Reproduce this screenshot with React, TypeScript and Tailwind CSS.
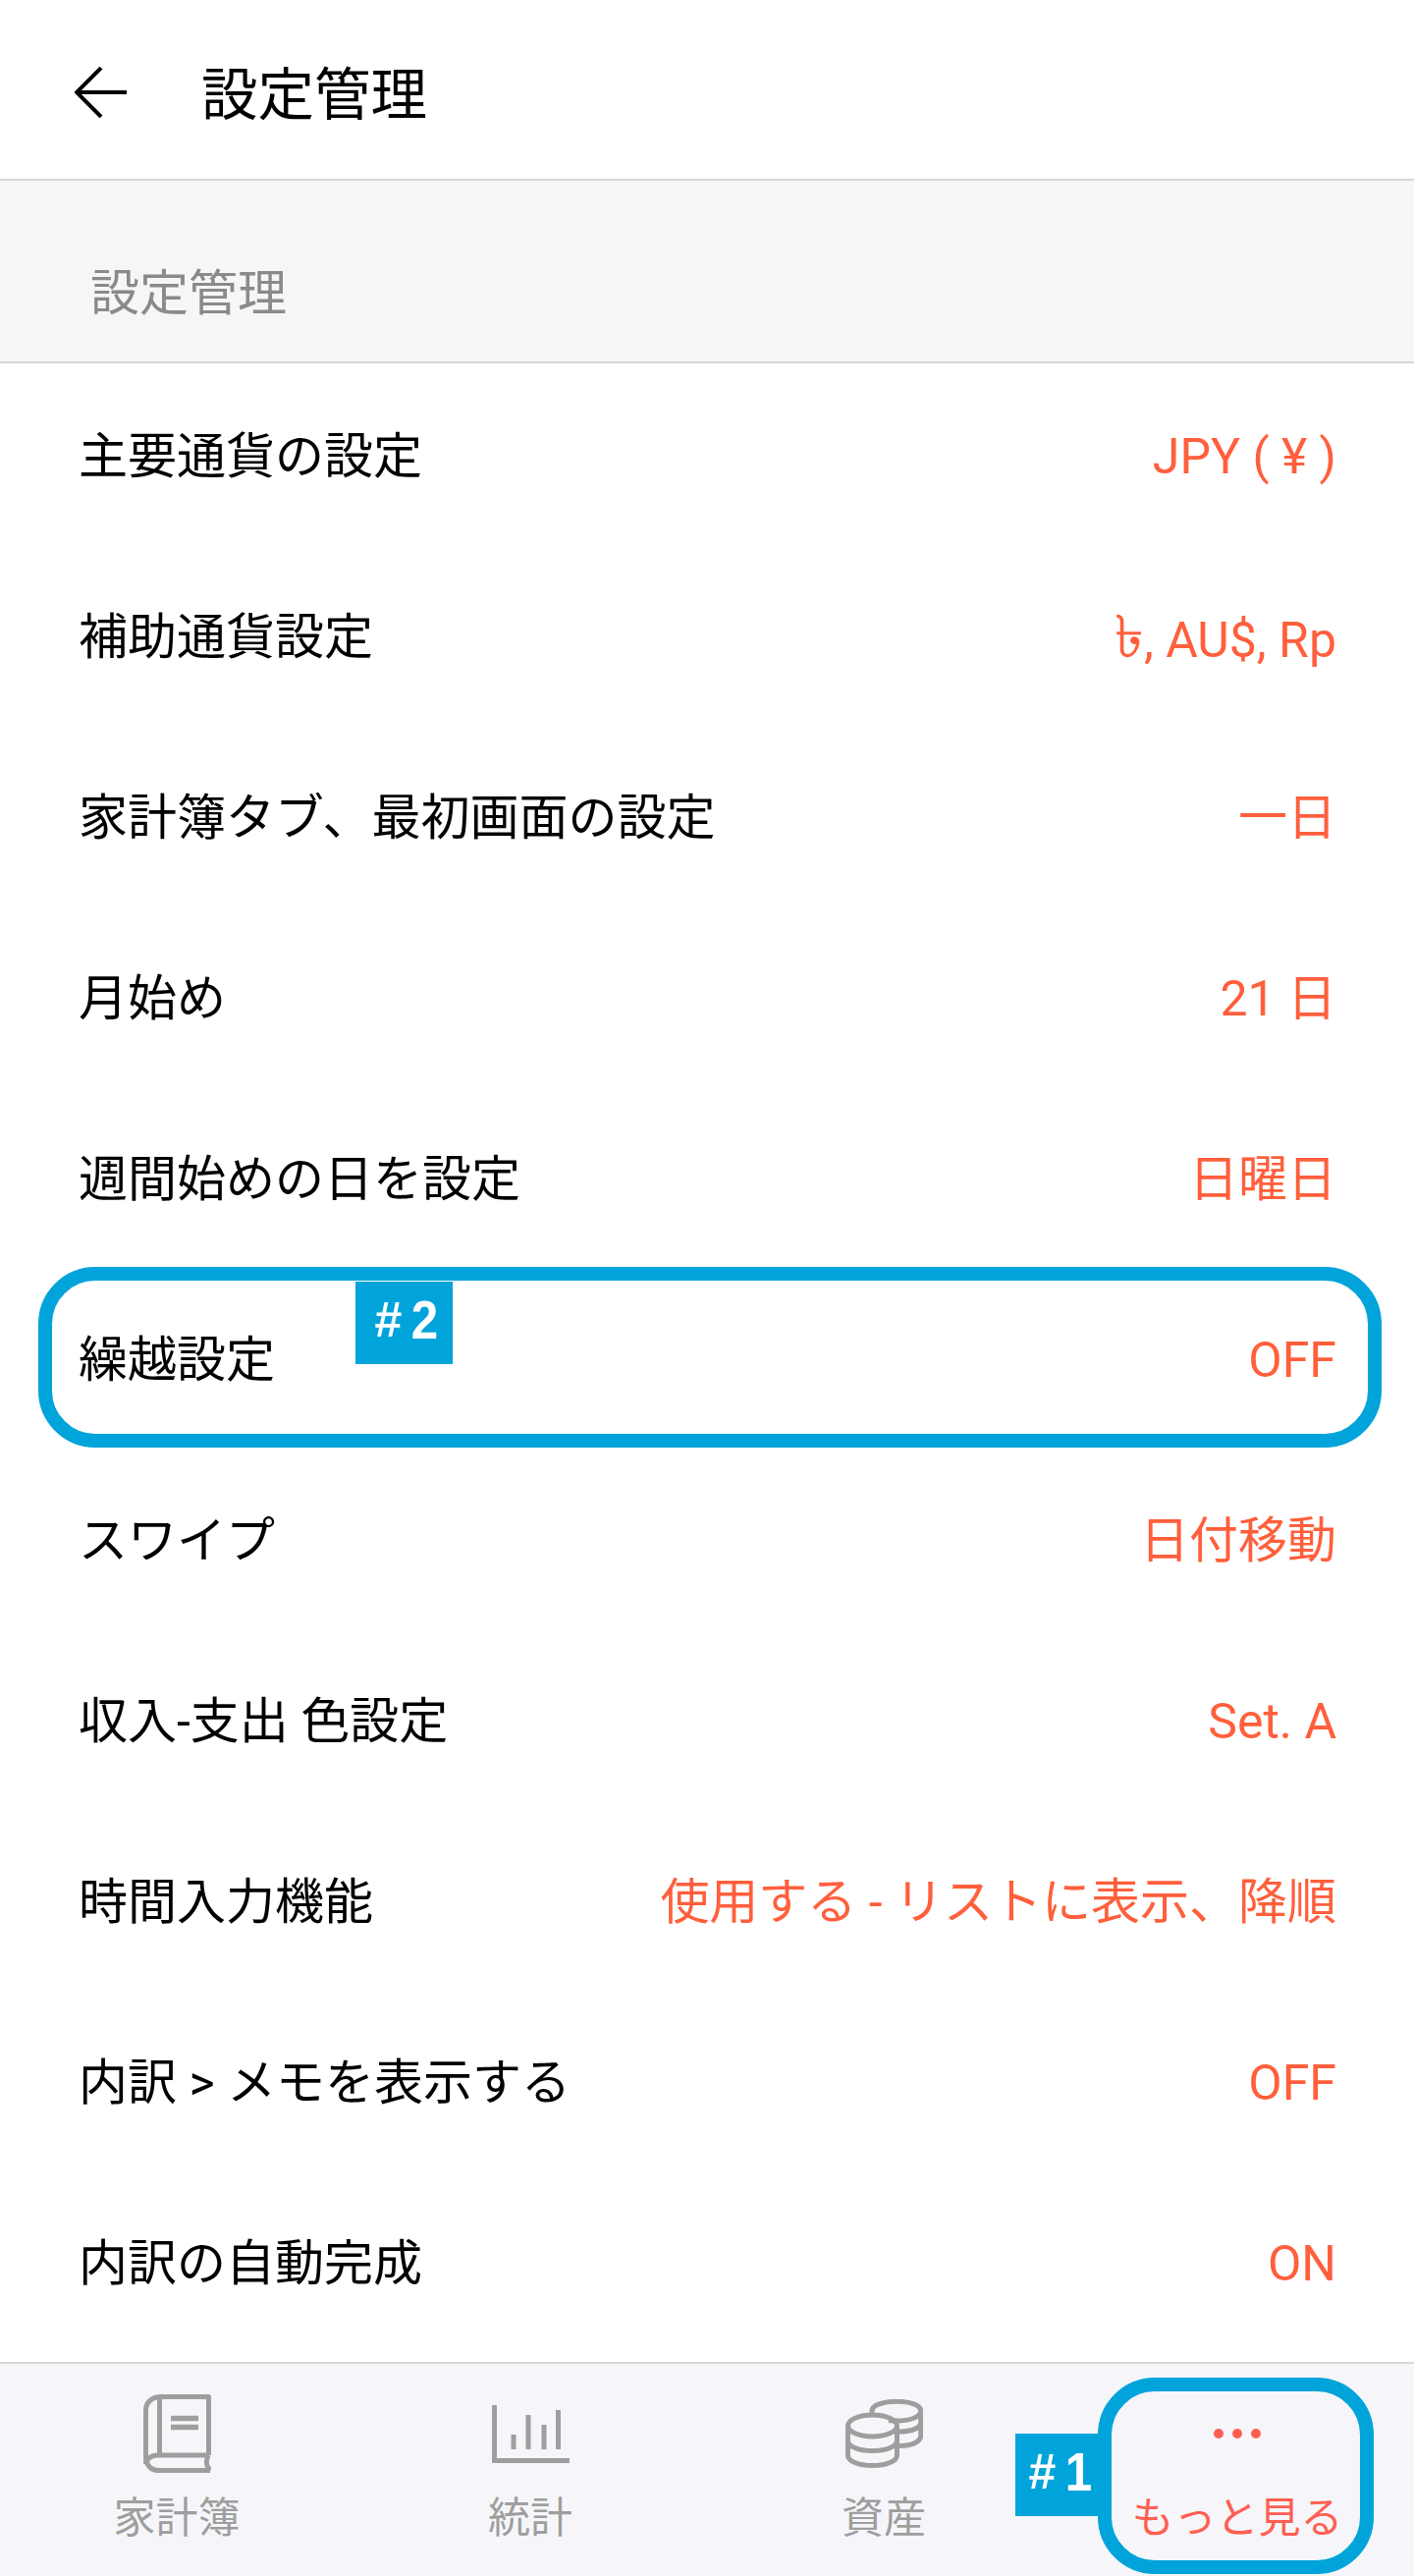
import React from 'react';

const rows: { label: string; value: React.ReactNode; marked?: boolean }[] = [
  { label: '主要通貨の設定', value: 'JPY ( ¥ )' },
  { label: '補助通貨設定', value: <><span className="text-[60px]">৳</span>, AU$, Rp</> },
  { label: '家計簿タブ、最初画面の設定', value: '一日' },
  { label: '月始め', value: '21 日' },
  { label: '週間始めの日を設定', value: '日曜日' },
  { label: '繰越設定', value: 'OFF', marked: true },
  { label: 'スワイプ', value: '日付移動' },
  { label: '収入-支出 色設定', value: 'Set. A' },
  { label: '時間入力機能', value: '使用する - リストに表示、降順' },
  { label: '内訳 > メモを表示する', value: 'OFF' },
  { label: '内訳の自動完成', value: 'ON' },
];

const BookIcon = () => (
  <svg width="69" height="80" viewBox="0 0 69 80" fill="none" stroke="#9e9e9e" strokeWidth="5" strokeLinejoin="round">
    <path d="M66.5 62V2.5H18C9 2.5 2.5 8 2.5 16V64C2.5 72 8 77.5 15 77.5H68" />
    <path d="M16.5 2.5V62M66.5 62H15C8 62 2.5 66 2.5 71M66.5 62C63.5 66 63.5 73 68 77.5" />
    <path d="M28 24.5H56M28 33.5H56" strokeWidth="5.5" />
  </svg>
);

const ChartIcon = () => (
  <svg width="79" height="59" viewBox="0 0 79 59" fill="none" stroke="#9e9e9e" strokeWidth="5">
    <path d="M2.5 0V56.5H79" />
    <path d="M22 30V45M37 10V45M53 20V45M67.5 5V45" />
  </svg>
);

const CoinsIcon = () => (
  <svg width="79" height="70" viewBox="0 0 79 70" fill="none" stroke="#9e9e9e" strokeWidth="5">
    <ellipse cx="27.5" cy="27" rx="25" ry="11" />
    <path d="M2.5 27V57C2.5 63 13 67.5 27.5 67.5S52.5 63 52.5 57V27" />
    <path d="M2.5 42C2.5 48 13 52.5 27.5 52.5S52.5 48 52.5 42" />
    <path d="M27 16V12C27 6 38 2.3 52 2.3S76.7 6 76.7 12V37C76.7 43 68 47.5 55 47.5" />
    <path d="M44 21.5C46.500 21.800 49 22 52 22C66 22 76.700 18 76.700 12" />
    <path d="M55 33C68 33 76.700 29 76.700 24" />
  </svg>
);

const Badge = ({ n, className }: { n: string; className: string }) => (
  <div className={`absolute flex items-center justify-center gap-[8px] bg-[#00a4da] pb-[6px] font-bold text-white leading-none font-['Liberation_Sans',sans-serif] ${className}`}>
    <span className="text-[50px]">#</span>
    <span className="inline-block scale-x-[0.88] text-[56px]">{n}</span>
  </div>
);

export default function App() {
  return (
    <div className="flex h-[2623px] w-[1440px] flex-col overflow-hidden bg-white font-['Roboto','Noto_Sans_CJK_JP',sans-serif]">
      <header className="flex h-[184px] shrink-0 items-center border-b-2 border-[#d6d6d6] pl-[76px] pt-[6px]">
        <svg width="54" height="52" viewBox="0 0 54 52" fill="none" stroke="#000" strokeWidth="4" className="shrink-0">
          <path d="M27 1L2 26L27 51" strokeLinejoin="miter" />
          <path d="M2 26H53" />
        </svg>
        <h1 className="ml-[75px] pt-[7px] text-[57.5px] leading-none text-black">設定管理</h1>
      </header>

      <div className="flex h-[186px] shrink-0 items-end border-b-2 border-[#d6d6d6] bg-[#f6f6f8] pb-[44px] pl-[92px] text-[50px] leading-none text-[#8a8a8a]">
        設定管理
      </div>

      <main className="flex-1">
        {rows.map((row) => (
          <div key={row.label} className="relative flex h-[184px] items-center justify-between pl-[80px] pr-[79px] pt-[5px] text-[50px] leading-none">
            <span className="text-black">{row.label}</span>
            <span className="text-[#ff5f3c]">{row.value}</span>
            {row.marked && (
              <>
                <div className="pointer-events-none absolute bottom-0 left-[39px] top-0 w-[1368px] rounded-[58px] border-[14px] border-[#00a4da]" />
                <Badge n="2" className="left-[362px] top-[15px] h-[84px] w-[99px] pl-[7px]" />
              </>
            )}
          </div>
        ))}
      </main>

      <nav className="grid h-[218px] shrink-0 grid-cols-4 border-t-2 border-[#d6d6d6] bg-[#f6f6fa] text-[43px] leading-none text-[#9e9e9e]">
        <div className="flex flex-col items-center pt-[31px]">
          <div className="flex h-[80px] items-center"><BookIcon /></div>
          <span className="mt-[25px]">家計簿</span>
        </div>
        <div className="flex flex-col items-center pt-[31px]">
          <div className="flex h-[80px] items-center"><ChartIcon /></div>
          <span className="mt-[25px]">統計</span>
        </div>
        <div className="flex flex-col items-center pt-[31px]">
          <div className="flex h-[80px] items-center"><CoinsIcon /></div>
          <span className="mt-[25px]">資産</span>
        </div>
        <div className="relative flex flex-col items-center pt-[31px] text-[#ff5f52]">
          <div className="flex h-[80px] items-center gap-[9px]">
            <span className="h-[10px] w-[10px] rounded-full bg-[#ff5f52]" />
            <span className="h-[10px] w-[10px] rounded-full bg-[#ff5f52]" />
            <span className="h-[10px] w-[10px] rounded-full bg-[#ff5f52]" />
          </div>
          <span className="mt-[25px]">もっと見る</span>
          <Badge n="1" className="-left-[46px] top-[71px] h-[84px] w-[86px] pl-[8px]" />
          <div className="pointer-events-none absolute left-[38px] top-[14px] h-[200px] w-[281px] rounded-[58px] border-[14px] border-[#00a4da]" />
        </div>
      </nav>
    </div>
  );
}
